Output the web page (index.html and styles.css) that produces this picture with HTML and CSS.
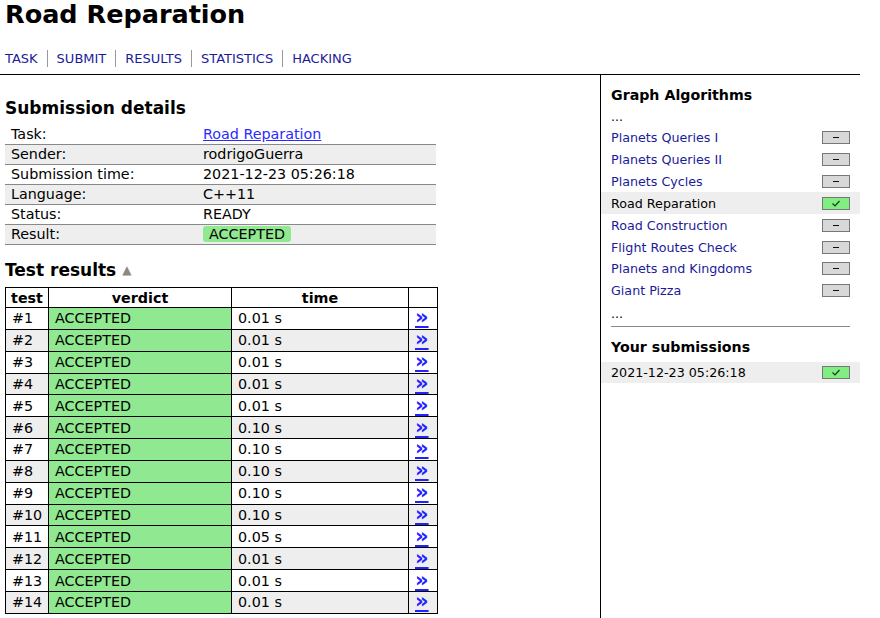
FILE: index.html
```html
<!DOCTYPE html>
<html>
<head>
<meta charset="utf-8">
<title>Road Reparation</title>
<link rel="stylesheet" href="styles.css">
</head>
<body>
<div class="page">
  <h1 class="title">Road Reparation</h1>
  <nav class="nav">
    <a class="nav-link first" href="#">TASK</a><a class="nav-link" href="#">SUBMIT</a><a class="nav-link" href="#">RESULTS</a><a class="nav-link" href="#">STATISTICS</a><a class="nav-link" href="#">HACKING</a>
  </nav>
  <div class="main">
    <div class="content">
      <h2 class="heading first-heading">Submission details</h2>
      <table class="details">
        <tr><td class="key">Task:</td><td class="val"><a class="task-link" href="#">Road Reparation</a></td></tr>
        <tr class="alt"><td class="key">Sender:</td><td class="val">rodrigoGuerra</td></tr>
        <tr><td class="key">Submission time:</td><td class="val">2021-12-23 05:26:18</td></tr>
        <tr class="alt"><td class="key">Language:</td><td class="val">C++11</td></tr>
        <tr><td class="key">Status:</td><td class="val">READY</td></tr>
        <tr class="alt"><td class="key">Result:</td><td class="val"><span class="badge">ACCEPTED</span></td></tr>
      </table>
      <h2 class="heading tests-heading">Test results <span class="arrow">&#9650;</span></h2>
      <table class="tests">
        <colgroup><col class="c-test"><col class="c-verdict"><col class="c-time"><col class="c-link"></colgroup>
        <tr><th>test</th><th>verdict</th><th>time</th><th></th></tr>
        <tr><td>#1</td><td class="ac">ACCEPTED</td><td>0.01 s</td><td class="lk"><a href="#">&raquo;</a></td></tr>
        <tr class="alt"><td>#2</td><td class="ac">ACCEPTED</td><td>0.01 s</td><td class="lk"><a href="#">&raquo;</a></td></tr>
        <tr><td>#3</td><td class="ac">ACCEPTED</td><td>0.01 s</td><td class="lk"><a href="#">&raquo;</a></td></tr>
        <tr class="alt"><td>#4</td><td class="ac">ACCEPTED</td><td>0.01 s</td><td class="lk"><a href="#">&raquo;</a></td></tr>
        <tr><td>#5</td><td class="ac">ACCEPTED</td><td>0.01 s</td><td class="lk"><a href="#">&raquo;</a></td></tr>
        <tr class="alt"><td>#6</td><td class="ac">ACCEPTED</td><td>0.10 s</td><td class="lk"><a href="#">&raquo;</a></td></tr>
        <tr><td>#7</td><td class="ac">ACCEPTED</td><td>0.10 s</td><td class="lk"><a href="#">&raquo;</a></td></tr>
        <tr class="alt"><td>#8</td><td class="ac">ACCEPTED</td><td>0.10 s</td><td class="lk"><a href="#">&raquo;</a></td></tr>
        <tr><td>#9</td><td class="ac">ACCEPTED</td><td>0.10 s</td><td class="lk"><a href="#">&raquo;</a></td></tr>
        <tr class="alt"><td>#10</td><td class="ac">ACCEPTED</td><td>0.10 s</td><td class="lk"><a href="#">&raquo;</a></td></tr>
        <tr><td>#11</td><td class="ac">ACCEPTED</td><td>0.05 s</td><td class="lk"><a href="#">&raquo;</a></td></tr>
        <tr class="alt"><td>#12</td><td class="ac">ACCEPTED</td><td>0.01 s</td><td class="lk"><a href="#">&raquo;</a></td></tr>
        <tr><td>#13</td><td class="ac">ACCEPTED</td><td>0.01 s</td><td class="lk"><a href="#">&raquo;</a></td></tr>
        <tr class="alt"><td>#14</td><td class="ac">ACCEPTED</td><td>0.01 s</td><td class="lk"><a href="#">&raquo;</a></td></tr>
      </table>
    </div>
    <aside class="sidebar">
      <h3 class="side-heading">Graph Algorithms</h3>
      <div class="side-row dots">...</div>
      <div class="side-row"><a class="side-link" href="#">Planets Queries I</a><span class="status"><span class="dash"></span></span></div>
      <div class="side-row"><a class="side-link" href="#">Planets Queries II</a><span class="status"><span class="dash"></span></span></div>
      <div class="side-row"><a class="side-link" href="#">Planets Cycles</a><span class="status"><span class="dash"></span></span></div>
      <div class="side-row current"><span class="side-current">Road Reparation</span><span class="status ok"><svg class="check" width="12" height="9" viewBox="0 0 12 9"><path d="M2.5 4.5 L5 7 L9.5 2" fill="none" stroke="#1a3a1a" stroke-width="1.2"/></svg></span></div>
      <div class="side-row"><a class="side-link" href="#">Road Construction</a><span class="status"><span class="dash"></span></span></div>
      <div class="side-row"><a class="side-link" href="#">Flight Routes Check</a><span class="status"><span class="dash"></span></span></div>
      <div class="side-row"><a class="side-link" href="#">Planets and Kingdoms</a><span class="status"><span class="dash"></span></span></div>
      <div class="side-row"><a class="side-link" href="#">Giant Pizza</a><span class="status"><span class="dash"></span></span></div>
      <div class="side-row dots">...</div>
      <hr class="side-hr">
      <h3 class="side-heading subs-heading">Your submissions</h3>
      <div class="side-row current sub-row"><span class="side-current">2021-12-23 05:26:18</span><span class="status ok"><svg class="check" width="12" height="9" viewBox="0 0 12 9"><path d="M2.5 4.5 L5 7 L9.5 2" fill="none" stroke="#1a3a1a" stroke-width="1.2"/></svg></span></div>
    </aside>
  </div>
</div>
</body>
</html>
```

FILE: styles.css
```css
html, body {
  margin: 0;
  padding: 0;
  background: #fff;
}

body {
  font-family: "DejaVu Sans", Verdana, sans-serif;
  color: #000;
  overflow: hidden;
}

.page {
  width: 860px;
}

.title {
  margin: 0;
  padding-left: 5px;
  font-size: 25.5px;
  line-height: 28px;
  font-weight: bold;
}

.nav {
  margin-top: 22px;
  padding-bottom: 7px;
  border-bottom: 1px solid #000;
  font-size: 13px;
  line-height: 17px;
}

.nav-link {
  display: inline-block;
  padding: 0 9px;
  border-left: 1px solid #999;
  color: #1b1b99;
  text-decoration: none;
}

.nav-link.first {
  padding-left: 5px;
  border-left: none;
}

.main {
  display: flex;
  align-items: stretch;
  min-height: 560px;
}

.content {
  width: 600px;
  flex: none;
}

.heading {
  margin: 0;
  padding-left: 5px;
  font-size: 17px;
  line-height: 20px;
  font-weight: bold;
}

.first-heading {
  margin-top: 23px;
  margin-bottom: 7px;
}

.tests-heading {
  margin-top: 15px;
  margin-bottom: 7px;
}

.arrow {
  font-size: 12px;
  color: #888;
  vertical-align: 2px;
}

.details {
  margin-left: 5px;
  width: 431px;
  border-collapse: collapse;
  font-size: 14.3px;
}

.details td {
  padding: 0 6px;
  height: 19px;
  line-height: 17px;
  border-bottom: 1px solid #888;
  white-space: nowrap;
}

.details .key {
  width: 180px;
}

.details tr.alt td {
  background: #eee;
}

.task-link {
  color: #2b2bff;
}

.badge {
  display: inline-block;
  padding: 0 6px;
  background: #90e890;
  border-radius: 3px;
  line-height: 16px;
}

.tests {
  margin-left: 5px;
  width: 432px;
  table-layout: fixed;
  border-collapse: collapse;
  font-size: 14.3px;
}

.c-test { width: 43px; }
.c-verdict { width: 183px; }
.c-time { width: 177px; }
.c-link { width: 29px; }

.tests th {
  border: 1px solid #000;
  height: 19px;
  padding: 0;
  font-weight: bold;
  line-height: 18px;
  text-align: center;
}

.tests td {
  border: 1px solid #000;
  height: 20.85px;
  padding: 0 6px;
  line-height: 18px;
  white-space: nowrap;
}

.tests tr.alt td {
  background: #eee;
}

.tests td.ac,
.tests tr.alt td.ac {
  background: #90e890;
}

.tests td.lk {
  padding: 0 0 0 6px;
}

.tests td.lk a {
  color: #2222ff;
  font-weight: bold;
  font-size: 21px;
  line-height: 18px;
}

.sidebar {
  flex: none;
  width: 259px;
  border-left: 1px solid #000;
}

.side-heading {
  margin: 10px 0 0 0;
  padding: 0 10px;
  font-size: 14.2px;
  line-height: 20px;
  font-weight: bold;
}

.side-row {
  display: flex;
  align-items: center;
  justify-content: space-between;
  height: 21.86px;
  padding: 0 10px;
  font-size: 12.7px;
}

.side-row.dots {
  padding-top: 2px;
  height: 19.86px;
}

.side-link {
  color: #1b1b99;
  text-decoration: none;
}

.current {
  background: #eee;
}

.status {
  display: flex;
  align-items: center;
  justify-content: center;
  box-sizing: border-box;
  width: 28px;
  height: 13px;
  border: 1px solid #777;
  background: #d8d8d8;
}

.status.ok {
  background: #80ee80;
}

.dash {
  display: block;
  width: 6px;
  height: 1px;
  background: #111;
}

.check {
  display: block;
}

.side-hr {
  margin: 2px 10px 0 10px;
  border: none;
  border-top: 1px solid #888;
  height: 0;
}

.subs-heading {
  margin-top: 10px;
}

.sub-row {
  margin-top: 5px;
}
```
